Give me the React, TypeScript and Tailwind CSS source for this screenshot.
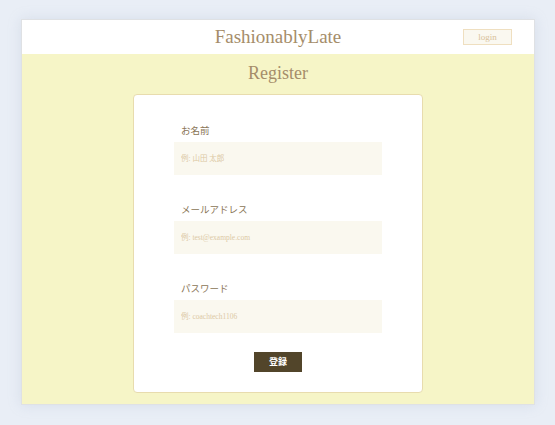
import React from 'react';

const serif = "font-['Liberation_Serif','Noto_Sans_CJK_JP',serif]";

const Field: React.FC<{ label: string; placeholder: string; type?: string }> = ({ label, placeholder, type = 'text' }) => (
    <div className="flex flex-col">
        <label className="pl-[7px] text-[9.5px] leading-[14px] text-[#8a7556] font-['Noto_Sans_CJK_JP',sans-serif]">{label}</label>
        <input
            type={type}
            placeholder={placeholder}
            className={`mt-[5px] h-[33px] w-[208px] bg-[#faf8ef] px-[7px] text-[7.5px] ${serif} text-[#8a7556] placeholder:text-[#dcc9a5] outline-none`}
        />
    </div>
);

export default function App() {
    return (
        <div className="min-h-[425px] w-full bg-[#e9eef6] pt-[19px] pl-[21px]">
            <div className="w-[514px] h-[386px] border border-[#dfe1e4] shadow-[0_0_12px_rgba(160,175,200,0.25)] flex flex-col">
                <header className="relative h-[34px] bg-white flex items-center justify-center">
                    <h1 className={`text-[19px] text-[#a58d6a] ${serif}`}>FashionablyLate</h1>
                    <button className={`absolute left-[441px] top-[9px] w-[49px] h-[16px] border border-[#efdfc0] bg-[#faf8f0] text-[9px] leading-none text-[#d9c29a] ${serif}`}>
                        login
                    </button>
                </header>
                <main className="flex-1 bg-[#f6f5c7] flex flex-col items-center">
                    <h2 className={`mt-[7px] text-[18px] leading-[24px] text-[#a58d6a] ${serif}`}>Register</h2>
                    <form className="mt-[9px] w-[290px] h-[299px] bg-white border border-[#e8dcae] rounded-[4px] flex flex-col items-center pt-[28px]">
                        <div className="flex flex-col gap-[27px]">
                            <Field label="お名前" placeholder="例: 山田 太郎" />
                            <Field label="メールアドレス" placeholder="例: test@example.com" type="email" />
                            <Field label="パスワード" placeholder="例: coachtech1106" type="password" />
                        </div>
                        <button
                            type="submit"
                            className="mt-[19px] w-[48px] h-[20px] bg-[#52452a] text-white text-[9px] font-bold font-['Noto_Sans_CJK_JP',sans-serif]"
                        >
                            登録
                        </button>
                    </form>
                </main>
            </div>
        </div>
    );
}
